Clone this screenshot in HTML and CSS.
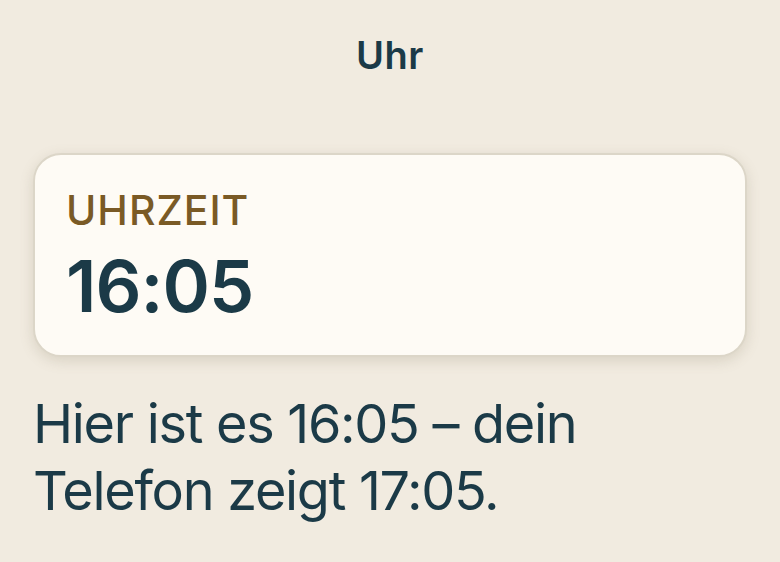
FILE: index.html
```html
<!DOCTYPE html>
<html lang="de">
<head>
    <meta charset="UTF-8">
    <meta name="viewport" content="width=device-width, initial-scale=1.0">
    <title>Uhr</title>
    <link rel="stylesheet" href="styles.css">
</head>
<body>
    <div class="screen">
        <h1 class="title">Uhr</h1>
        <div class="card">
            <div class="label">UHRZEIT</div>
            <div class="time">16:05</div>
        </div>
        <p class="note">Hier ist es 16:05 – dein Telefon zeigt 17:05.</p>
    </div>
</body>
</html>
```

FILE: styles.css
```css
body {
    margin: 0;
    background-color: #f1ebe0;
    font-family: 'Inter', 'Noto Sans', sans-serif;
    color: #1b3a47;
}

.screen {
    padding: 0 33px;
}

.title {
    margin: 0;
    padding-top: 32px;
    height: 153px;
    box-sizing: border-box;
    text-align: center;
    font-size: 38px;
    font-weight: 600;
    line-height: 46px;
    letter-spacing: 0.5px;
}

.card {
    background-color: #fefbf5;
    border: 2px solid #dcd6c8;
    border-radius: 28px;
    box-shadow: 0 4px 14px rgba(120, 110, 80, 0.2);
    padding: 30px 31px 0;
    height: 204px;
    box-sizing: border-box;
}

.label {
    color: #7a5a25;
    font-size: 41px;
    font-weight: 500;
    line-height: 50px;
    letter-spacing: 1px;
}

.time {
    margin-top: 11px;
    font-size: 72px;
    font-weight: 600;
    line-height: 80px;
    letter-spacing: -1px;
}

.note {
    margin: 33px 0 0;
    font-size: 54px;
    line-height: 67px;
    letter-spacing: -1.3px;
    max-width: 620px;
}
```
